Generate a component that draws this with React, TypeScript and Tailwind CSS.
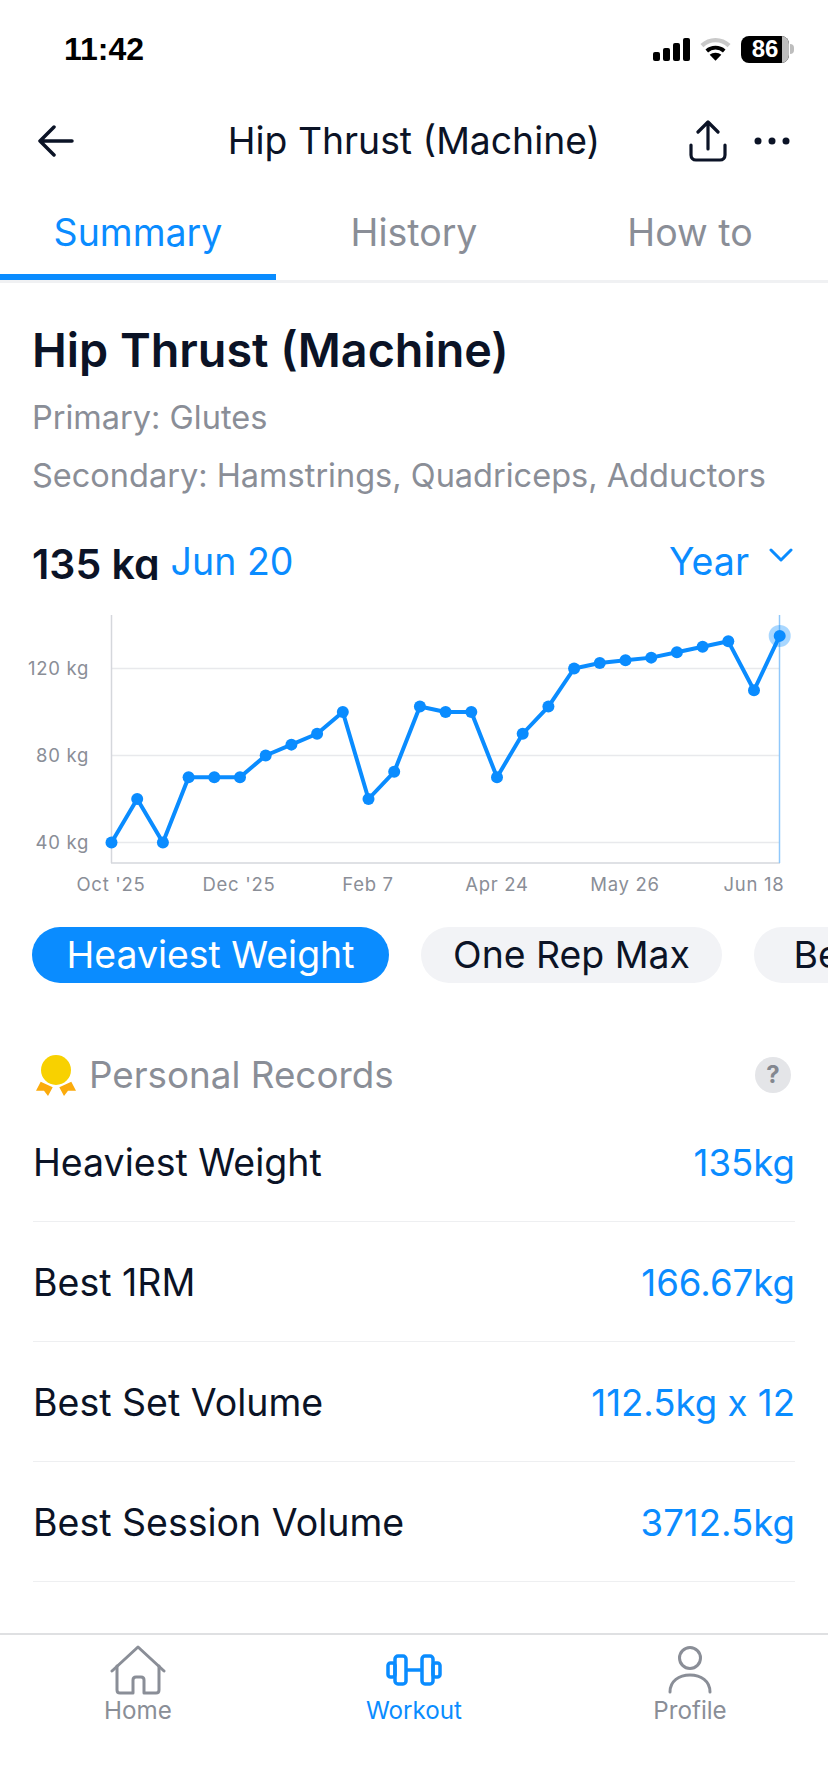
const font = { fontFamily: '"Inter", "Noto Sans", sans-serif' };

const weights = [40, 60, 40, 70, 70, 70, 80, 85, 90, 100, 60, 72.5, 102.5, 100, 100, 70, 90, 102.5, 120, 122.5, 123.75, 125, 127.5, 130, 132.5, 110, 135];
const chartX = (i: number) => 111.5 + i * 25.7;
const chartY = (kg: number) => 242.5 - ((kg - 40) * 87) / 40;

const xLabels: [number, string][] = [
  [111, "Oct '25"],
  [239, "Dec '25"],
  [368, 'Feb 7'],
  [497, 'Apr 24'],
  [625, 'May 26'],
  [754, 'Jun 18'],
];

const Chart = () => {
  const last = weights.length - 1;
  return (
    <svg viewBox="0 0 828 300" width="828" height="300" className="block">
      {[120, 80, 40].map((kg) => (
        <g key={kg}>
          <line x1="111.5" x2="780" y1={chartY(kg)} y2={chartY(kg)} stroke="#e8e9ec" strokeWidth="1.5" />
          <text x="89" y={chartY(kg) + 6} textAnchor="end" fontSize="18.5" fill="#8a8e97" letterSpacing="0.7">
            {kg} kg
          </text>
        </g>
      ))}
      <line x1="111.5" x2="111.5" y1="15" y2="263" stroke="#d5d7dc" strokeWidth="1.5" />
      <line x1="111" x2="780" y1="263" y2="263" stroke="#d5d7dc" strokeWidth="1.5" />
      <line x1="779.5" x2="779.5" y1="15" y2="263" stroke="#90c8fb" strokeWidth="1.5" />
      <polyline
        points={weights.map((w, i) => `${chartX(i)},${chartY(w)}`).join(' ')}
        fill="none"
        stroke="#0a8cff"
        strokeWidth="4"
        strokeLinejoin="round"
      />
      <circle cx={chartX(last)} cy={chartY(weights[last])} r="11" fill="#0a8cff" fillOpacity="0.35" />
      {weights.map((w, i) => (
        <circle key={i} cx={chartX(i)} cy={chartY(w)} r="6" fill="#0a8cff" />
      ))}
      {xLabels.map(([x, label]) => (
        <text key={label} x={x} y="291" textAnchor="middle" fontSize="18.5" fill="#8a8e97" letterSpacing="0.7">
          {label}
        </text>
      ))}
    </svg>
  );
};

const StatusIcons = () => (
  <div className="flex items-center gap-[10px]">
    <svg width="37" height="23" viewBox="0 0 37 23" fill="#000">
      <rect x="0" y="14" width="7" height="9" rx="2" />
      <rect x="10" y="10" width="7" height="13" rx="2" />
      <rect x="20" y="5" width="7" height="18" rx="2" />
      <rect x="30" y="0" width="7" height="23" rx="2" />
    </svg>
    <svg width="31" height="25" viewBox="0 0 32 25" fill="none">
      <path d="M2 8.5C10 1 22 1 30 8.5" stroke="#c9c9c9" strokeWidth="4.5" />
      <path d="M7 14C12 9.5 20 9.5 25 14" stroke="#000" strokeWidth="4" />
      <path d="M16 24L10 18C13 15 19 15 22 18Z" fill="#000" />
    </svg>
    <div className="flex items-center">
      <div className="relative flex h-[27px] w-[48px] items-center justify-center overflow-hidden rounded-[8px] bg-black">
        <div className="absolute inset-y-0 right-0 w-[7px] bg-[#bdbdbd]" />
        <span className="relative text-[24px] font-bold leading-none text-white" style={{ fontFamily: '"Liberation Sans", sans-serif' }}>
          86
        </span>
      </div>
      <div className="ml-[1px] h-[10px] w-[4px] rounded-r-full bg-[#bdbdbd]" />
    </div>
  </div>
);

const Medal = () => (
  <svg width="40" height="41" viewBox="0 0 40 41">
    <path d="M4.7 26.7L16.7 32.3L12 41L8 35.7L0 35.7Z" fill="#fbab0c" />
    <path d="M35.3 26.7L23.3 32.3L28 41L32 35.7L40 35.7Z" fill="#fbab0c" />
    <circle cx="20" cy="15" r="15" fill="#f8d100" />
  </svg>
);

const HomeIcon = () => (
  <svg width="56" height="50" viewBox="0 0 56 50" fill="none" stroke="#8a8e97" strokeWidth="3" strokeLinecap="round" strokeLinejoin="round">
    <path d="M2 26L28 2L54 26" />
    <path d="M7 21V45C7 47 8 48 10 48H23V35C23 33 24 32 26 32H31C33 32 34 33 34 35V48H46C48 48 49 47 49 45V21" />
  </svg>
);

const DumbbellIcon = () => (
  <svg width="56" height="32" viewBox="0 0 56 32" fill="none" stroke="#0a8cff" strokeWidth="3.5" strokeLinejoin="round">
    <rect x="9" y="2" width="11" height="28" rx="3" />
    <rect x="36" y="2" width="11" height="28" rx="3" />
    <rect x="2" y="9" width="7" height="14" rx="2.5" />
    <rect x="47" y="9" width="7" height="14" rx="2.5" />
    <line x1="20" y1="16" x2="36" y2="16" />
  </svg>
);

const ProfileIcon = () => (
  <svg width="44" height="48" viewBox="0 0 44 48" fill="none" stroke="#8a8e97" strokeWidth="3" strokeLinecap="round">
    <circle cx="22" cy="12" r="10.5" />
    <path d="M2 46C2 35 11 29 22 29C33 29 42 35 42 46" />
  </svg>
);

const records = [
  ['Heaviest Weight', '135kg'],
  ['Best 1RM', '166.67kg'],
  ['Best Set Volume', '112.5kg x 12'],
  ['Best Session Volume', '3712.5kg'],
];

export default function App() {
  return (
    <div className="flex h-[1792px] w-[828px] flex-col overflow-hidden bg-white text-[#0b1326]" style={font}>
      {/* Status bar */}
      <div className="flex h-[98px] shrink-0 items-center justify-between pl-[64px] pr-[34px]">
        <span className="text-[32px] font-semibold text-black" style={{ fontFamily: '"Liberation Sans", sans-serif' }}>
          11:42
        </span>
        <StatusIcons />
      </div>

      {/* Nav */}
      <div className="grid h-[86px] shrink-0 grid-cols-[1fr_auto_1fr] items-center pl-[38px] pr-[38px]">
        <svg width="36" height="32" viewBox="0 0 36 32" fill="none" stroke="#0b1326" strokeWidth="3.5" strokeLinecap="round" strokeLinejoin="round">
          <path d="M34 16H2M16 2L2 16L16 30" />
        </svg>
        <span className="text-[37.3px]">Hip Thrust (Machine)</span>
        <div className="flex items-center justify-end gap-[27px]">
          <svg width="38" height="42" viewBox="0 0 38 42" fill="none" stroke="#0b1326" strokeWidth="3.2" strokeLinecap="round" strokeLinejoin="round">
            <path d="M19 29V2M9 12L19 2L29 12" />
            <path d="M2 25V35C2 38 4 40 7 40H31C34 40 36 38 36 35V25" />
          </svg>
          <svg width="36" height="8" viewBox="0 0 36 8" fill="#0b1326">
            <circle cx="4" cy="4" r="3.5" />
            <circle cx="18" cy="4" r="3.5" />
            <circle cx="32" cy="4" r="3.5" />
          </svg>
        </div>
      </div>

      {/* Tabs */}
      <div className="grid h-[99px] shrink-0 grid-cols-3 border-b-[3px] border-[#f0f1f3] text-center text-[37.5px] text-[#8a8e97]">
        <div className="flex h-[96px] items-start justify-center border-b-[6px] border-[#0a8cff] pt-[21px] text-[#0a8cff]">Summary</div>
        <div className="pt-[21px]">History</div>
        <div className="pt-[21px]">How to</div>
      </div>

      {/* Exercise info */}
      <div className="shrink-0 pl-[32px] pr-[33px]">
        <h1 className="mt-[39px] text-[46.7px] font-semibold leading-[56px]">Hip Thrust (Machine)</h1>
        <p className="mt-[20px] text-[32.5px] leading-[40px] text-[#8a8e97]">Primary: Glutes</p>
        <p className="mt-[18px] whitespace-nowrap text-[32.5px] leading-[40px] text-[#8a8e97]">Secondary: Hamstrings, Quadriceps, Adductors</p>
        <div className="mt-[44px] flex items-center justify-between pr-[2px]">
          <div className="flex items-center gap-[11px]">
            <span className="mt-[2px] h-[38px] self-start overflow-hidden text-[41px] font-semibold leading-[44px]">135 kg</span>
            <span className="text-[37.5px] leading-[44px] text-[#0a8cff]">Jun 20</span>
          </div>
          <div className="flex items-center gap-[20px] text-[37.5px] leading-[44px] text-[#0a8cff]">
            <span>Year</span>
            <svg className="-mt-[14px]" width="24" height="14" viewBox="0 0 24 14" fill="none" stroke="#0a8cff" strokeWidth="3" strokeLinecap="round" strokeLinejoin="round">
              <path d="M2 2L12 12L22 2" />
            </svg>
          </div>
        </div>
      </div>

      {/* Chart */}
      <div className="mt-[16px] h-[300px] shrink-0">
        <Chart />
      </div>

      {/* Metric chips */}
      <div className="mt-[27px] flex shrink-0 gap-[32px] overflow-hidden pl-[32px] text-[37.4px]">
        <div className="flex h-[56px] w-[357px] shrink-0 items-center justify-center rounded-full bg-[#0a8cff] text-white">Heaviest Weight</div>
        <div className="flex h-[56px] w-[301px] shrink-0 items-center justify-center rounded-full bg-[#f2f3f6]">One Rep Max</div>
        <div className="flex h-[56px] w-[300px] shrink-0 items-center justify-center rounded-full bg-[#f2f3f6]">Best Volume</div>
      </div>

      {/* Personal records */}
      <div className="mt-[70px] flex shrink-0 items-center justify-between pl-[36px] pr-[37px]">
        <div className="flex items-center gap-[13px]">
          <Medal />
          <span className="text-[36.8px] leading-[44px] text-[#8a8e97]">Personal Records</span>
        </div>
        <div className="flex h-[36px] w-[36px] items-center justify-center rounded-full bg-[#e4e5e8] text-[24px] font-bold text-[#83878f]">?</div>
      </div>
      <div className="mt-[5px] shrink-0 px-[33px]">
        {records.map(([label, value]) => (
          <div key={label} className="flex h-[120px] items-center justify-between border-b-[1px] border-[#eeeff1] pt-[4px]">
            <span className="text-[37.5px]">{label}</span>
            <span className="text-[36.6px] text-[#0a8cff]">{value}</span>
          </div>
        ))}
      </div>

      {/* Tab bar */}
      <div className="mt-auto grid h-[159px] shrink-0 grid-cols-3 border-t-[2px] border-[#dfe0e2] text-center text-[24.2px] leading-[30px] text-[#8a8e97]">
        <div className="flex flex-col items-center pt-[10px]">
          <div className="flex h-[50px] items-center"><HomeIcon /></div>
          <span className="mt-[1px]">Home</span>
        </div>
        <div className="flex flex-col items-center pt-[10px] text-[#0a8cff]">
          <div className="flex h-[50px] items-center"><DumbbellIcon /></div>
          <span className="mt-[1px]">Workout</span>
        </div>
        <div className="flex flex-col items-center pt-[10px]">
          <div className="flex h-[50px] items-center"><ProfileIcon /></div>
          <span className="mt-[1px]">Profile</span>
        </div>
      </div>
    </div>
  );
}
